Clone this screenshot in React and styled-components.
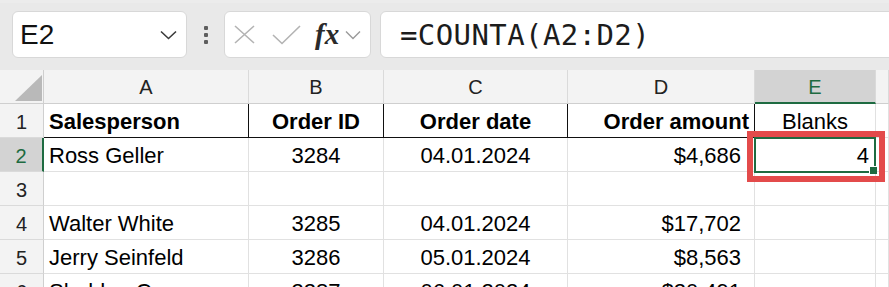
import styled, { createGlobalStyle } from "styled-components";

const GlobalStyle = createGlobalStyle`
    html, body {
        margin: 0;
        padding: 0;
        background: #ffffff;
        overflow: hidden;
    }
    * {
        box-sizing: border-box;
    }
`;

const Page = styled.div`
    width: 889px;
    height: 287px;
    overflow: hidden;
    font-family: "Liberation Sans", Arial, sans-serif;
    color: #111;
`;

const Toolbar = styled.div`
    height: 70px;
    background: #e9e9e9;
    border-top: 3px solid #ececec;
    display: flex;
    align-items: flex-start;
    padding: 8px 0 0 12px;
    overflow: hidden;
`;

const Box = styled.div`
    height: 47px;
    background: #ffffff;
    border: 1px solid #d8d8d8;
    border-radius: 6px;
    display: flex;
    align-items: center;
    flex: ${p => (p.$grow ? "1" : "none")};
    width: ${p => (p.$width ? p.$width + "px" : "auto")};
    margin-right: ${p => (p.$grow ? "-12px" : "0")};
`;

const NameText = styled.span`
    flex: 1;
    padding-left: 7px;
    font-size: 28px;
    color: #111;
`;

const Dots = styled.div`
    width: 37px;
    height: 47px;
    display: flex;
    flex-direction: column;
    align-items: center;
    justify-content: center;
    gap: 3px;
`;

const Dot = styled.span`
    width: 4px;
    height: 4px;
    background: #5e5e5e;
    border-radius: 1px;
`;

const Fx = styled.span`
    font-family: "Liberation Serif", "Times New Roman", serif;
    font-style: italic;
    font-weight: bold;
    font-size: 29px;
    color: #2a2a2a;
    margin-left: 13px;
    margin-right: 6px;
`;

const Formula = styled.span`
    font-family: "DejaVu Sans Mono", "Liberation Mono", monospace;
    font-size: 29px;
    color: #1c1c1c;
    padding-left: 19px;
    letter-spacing: 0.4px;
`;

const Grid = styled.div`
    display: grid;
    grid-template-columns: 44px 205px 135px 184px 187px 121px 1fr;
    grid-auto-rows: 34px;
`;

const HeadCell = styled.div`
    background: ${p => (p.$active ? "#d3d3d3" : "#f3f3f3")};
    color: ${p => (p.$active ? "#1e6b41" : "#222")};
    border-right: 1px solid #dadada;
    border-bottom: ${p => (p.$active ? "2px solid #1e6b41" : "1px solid #cfcfcf")};
    font-size: 20px;
    display: flex;
    align-items: center;
    justify-content: center;
    padding-top: 2px;
`;

const Corner = styled.div`
    background: #f3f3f3;
    border-right: 1px solid #cfcfcf;
    border-bottom: 1px solid #cfcfcf;
    position: relative;
    &::after {
        content: "";
        position: absolute;
        left: 15px;
        top: 5px;
        width: 27px;
        height: 26px;
        background: #b9b9b9;
        clip-path: polygon(100% 0, 100% 100%, 0 100%);
    }
`;

const RowHead = styled.div`
    background: ${p => (p.$active ? "#d3d3d3" : "#f3f3f3")};
    color: ${p => (p.$active ? "#1e6b41" : "#222")};
    border-right: ${p => (p.$active ? "2px solid #1e6b41" : "1px solid #cfcfcf")};
    border-bottom: 1px solid #dadada;
    font-size: 20px;
    display: flex;
    align-items: center;
    justify-content: center;
    padding-top: 3px;
`;

const Cell = styled.div`
    position: relative;
    border-right: 1px solid ${p => (p.$head ? "#111" : "#e1e1e1")};
    border-bottom: 1px solid ${p => (p.$head ? "#111" : "#e1e1e1")};
    font-size: 22px;
    font-weight: ${p => (p.$bold ? "bold" : "normal")};
    color: #000;
    display: flex;
    align-items: center;
    padding: 3px ${p => p.$pr ?? 5}px 0 5px;
    white-space: nowrap;
    justify-content: ${p =>
        p.$align === "right" ? "flex-end" : p.$align === "center" ? "center" : "flex-start"};
`;

const Selection = styled.div`
    position: absolute;
    top: -1px;
    left: -1px;
    right: -1px;
    bottom: -2px;
    border: 2px solid #1e6b41;
    z-index: 2;
    &::after {
        content: "";
        position: absolute;
        right: -3px;
        bottom: -3px;
        width: 7px;
        height: 7px;
        background: #1e6b41;
        border-left: 1px solid #fff;
        border-top: 1px solid #fff;
    }
`;

const Highlight = styled.div`
    position: absolute;
    top: -7px;
    left: -8px;
    right: -10px;
    bottom: -11px;
    border: 6px solid #e34b4b;
    z-index: 3;
    pointer-events: none;
`;

// the F column is only a sliver at the right edge, its letter lies off-screen
const columns = ["A", "B", "C", "D", "E", ""];

const rows = [
    ["Ross Geller", "3284", "04.01.2024", "$4,686"],
    ["", "", "", ""],
    ["Walter White", "3285", "04.01.2024", "$17,702"],
    ["Jerry Seinfeld", "3286", "05.01.2024", "$8,563"],
    ["Sheldon Cooper", "3287", "06.01.2024", "$20,491"],
];

export default function App() {
    return (
        <Page>
            <GlobalStyle />
            <Toolbar>
                <Box $width={175}>
                    <NameText>E2</NameText>
                    <svg width="17" height="10" viewBox="0 0 17 10" style={{ marginRight: 9 }}>
                        <path d="M1 1.5 L8.5 8.5 L16 1.5" fill="none" stroke="#3a3a3a" strokeWidth="1.6" />
                    </svg>
                </Box>
                <Dots>
                    <Dot />
                    <Dot />
                    <Dot />
                </Dots>
                <Box $width={147}>
                    <svg width="24" height="20" viewBox="0 0 24 20" style={{ marginLeft: 8 }}>
                        <path d="M2 1 L21 18 M21 1 L2 18" stroke="#b3b3b3" strokeWidth="1.6" fill="none" />
                    </svg>
                    <svg width="30" height="20" viewBox="0 0 30 20" style={{ marginLeft: 15 }}>
                        <path d="M1 10 L10 18.5 L28 1" stroke="#b3b3b3" strokeWidth="1.6" fill="none" />
                    </svg>
                    <Fx>fx</Fx>
                    <svg width="16" height="10" viewBox="0 0 16 10">
                        <path d="M1 1.5 L8 8.5 L15 1.5" fill="none" stroke="#9a9a9a" strokeWidth="1.4" />
                    </svg>
                </Box>
                <div style={{ width: 9 }} />
                <Box $grow>
                    <Formula>=COUNTA(A2:D2)</Formula>
                </Box>
            </Toolbar>
            <Grid>
                <Corner />
                {columns.map((c, i) => (
                    <HeadCell key={i} $active={c === "E"}>
                        {c}
                    </HeadCell>
                ))}

                <RowHead>1</RowHead>
                <Cell $head $bold>Salesperson</Cell>
                <Cell $head $bold $align="center">Order ID</Cell>
                <Cell $head $bold $align="center">Order date</Cell>
                <Cell $head $bold $align="right">Order amount</Cell>
                <Cell $align="center">Blanks</Cell>
                <Cell />

                {rows.map((r, i) => {
                    const n = i + 2;
                    return [
                        <RowHead key={"h" + n} $active={n === 2}>{n}</RowHead>,
                        <Cell key={"a" + n}>{r[0]}</Cell>,
                        <Cell key={"b" + n} $align="center">{r[1]}</Cell>,
                        <Cell key={"c" + n} $align="center">{r[2]}</Cell>,
                        <Cell key={"d" + n} $align="right" $pr={13}>{r[3]}</Cell>,
                        <Cell key={"e" + n} $align="right" $pr={6}>
                            {n === 2 && (
                                <>
                                    4
                                    <Selection />
                                    <Highlight />
                                </>
                            )}
                        </Cell>,
                        <Cell key={"f" + n} />,
                    ];
                })}
            </Grid>
        </Page>
    );
}
